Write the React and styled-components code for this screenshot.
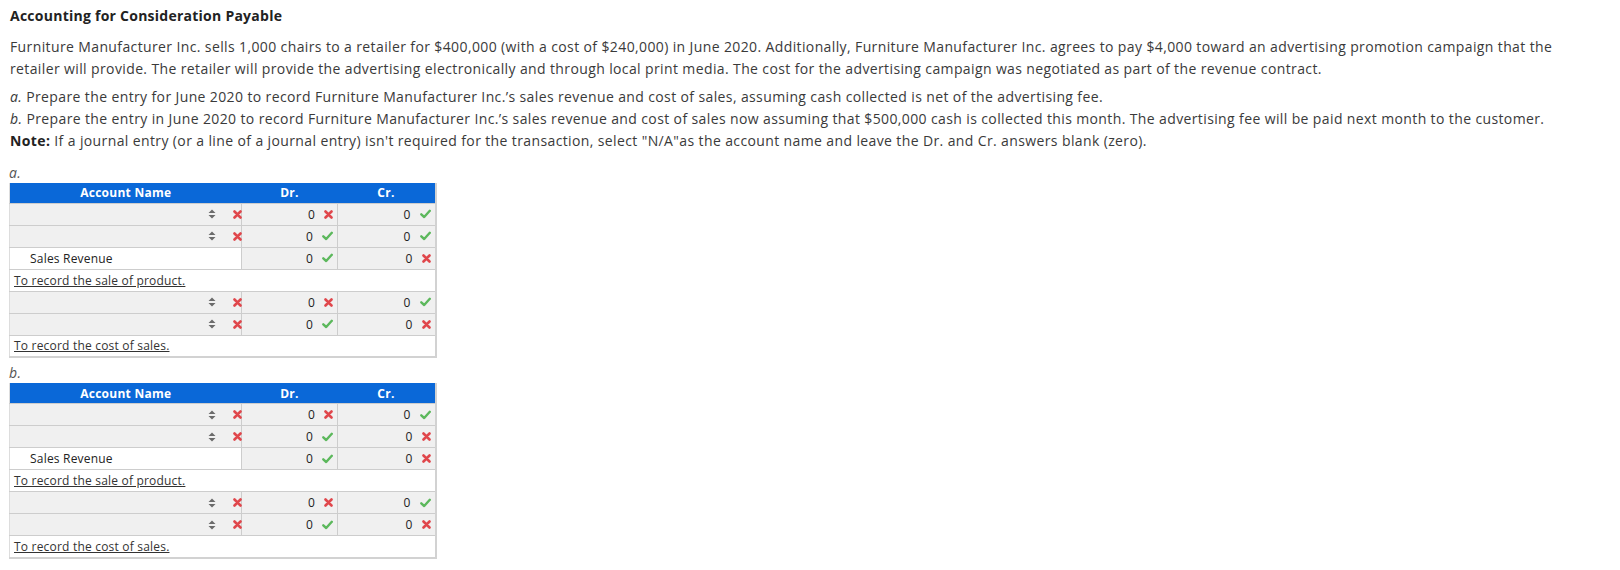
import React from "react";
import styled, { createGlobalStyle } from "styled-components";

const GlobalStyle = createGlobalStyle`
  body {
    margin: 0;
    background: #fff;
    font-family: "Open Sans", "Liberation Sans", sans-serif;
    color: #333;
  }
`;

const entriesA = [
  {
    memo: "To record the sale of product.",
    rows: [
      { account: null, dr: "x", cr: "ok" },
      { account: null, dr: "ok", cr: "ok" },
      { account: "Sales Revenue", dr: "ok", cr: "x" },
    ],
  },
  {
    memo: "To record the cost of sales.",
    rows: [
      { account: null, dr: "x", cr: "ok" },
      { account: null, dr: "ok", cr: "x" },
    ],
  },
];

const entriesB = [
  {
    memo: "To record the sale of product.",
    rows: [
      { account: null, dr: "x", cr: "ok" },
      { account: null, dr: "ok", cr: "x" },
      { account: "Sales Revenue", dr: "ok", cr: "x" },
    ],
  },
  {
    memo: "To record the cost of sales.",
    rows: [
      { account: null, dr: "x", cr: "ok" },
      { account: null, dr: "ok", cr: "x" },
    ],
  },
];

const Arrows = () => (
  <svg width="8" height="12" viewBox="0 0 8 12">
    <path d="M0.5 5 L4 1.5 L7.5 5 Z M0.5 7 L4 10.5 L7.5 7 Z" fill="#6b6b6b" />
  </svg>
);

const Wrong = () => (
  <svg width="9" height="9" viewBox="0 0 9 9">
    <path
      d="M1.5 1.5 L7.5 7.5 M7.5 1.5 L1.5 7.5"
      stroke="#e0474c"
      strokeWidth="2.6"
      strokeLinecap="round"
    />
  </svg>
);

const Right = () => (
  <svg width="11" height="10" viewBox="0 0 11 10">
    <path
      d="M1.3 5.3 L4.2 8 L9.8 1.8"
      stroke="#5cb85c"
      strokeWidth="2.4"
      fill="none"
      strokeLinecap="round"
      strokeLinejoin="round"
    />
  </svg>
);

const Mark = ({ kind }) => (kind === "ok" ? <Right /> : <Wrong />);

const JournalTable = ({ data }) => (
  <Table>
    <colgroup>
      <col style={{ width: 232 }} />
      <col style={{ width: 96 }} />
      <col style={{ width: 98 }} />
    </colgroup>
    <thead>
      <tr>
        <Th>Account Name</Th>
        <Th>Dr.</Th>
        <Th>Cr.</Th>
      </tr>
    </thead>
    <tbody>
      {data.map((entry, i) => (
        <React.Fragment key={i}>
          {entry.rows.map((row, j) => (
            <Row key={j}>
              {row.account ? (
                <AccountTd $white>
                  <AccountName>{row.account}</AccountName>
                </AccountTd>
              ) : (
                <AccountTd>
                  <Select>
                    <Arrows />
                    <Wrong />
                  </Select>
                </AccountTd>
              )}
              <Td>
                <Amount>
                  0 <Mark kind={row.dr} />
                </Amount>
              </Td>
              <Td>
                <Amount>
                  0 <Mark kind={row.cr} />
                </Amount>
              </Td>
            </Row>
          ))}
          <Row>
            <MemoTd colSpan={3}>
              <Memo>{entry.memo}</Memo>
            </MemoTd>
          </Row>
        </React.Fragment>
      ))}
    </tbody>
  </Table>
);

export default function App() {
  return (
    <Page>
      <GlobalStyle />
      <Title>Accounting for Consideration Payable</Title>
      <Para>
        Furniture Manufacturer Inc. sells 1,000 chairs to a retailer for $400,000 (with a cost
        of $240,000) in June 2020. Additionally, Furniture Manufacturer Inc. agrees to pay
        $4,000 toward an advertising promotion campaign that the retailer will provide. The
        retailer will provide the advertising electronically and through local print media. The
        cost for the advertising campaign was negotiated as part of the revenue contract.
      </Para>
      <Para>
        <em>a.</em> Prepare the entry for June 2020 to record Furniture Manufacturer Inc.’s sales
        revenue and cost of sales, assuming cash collected is net of the advertising fee.
        <br />
        <em>b.</em> Prepare the entry in June 2020 to record Furniture Manufacturer Inc.’s sales
        revenue and cost of sales now assuming that $500,000 cash is collected this month. The
        advertising fee will be paid next month to the customer.
        <br />
        <strong>Note:</strong> If a journal entry (or a line of a journal entry) isn't required
        for the transaction, select "N/A"as the account name and leave the Dr. and Cr. answers
        blank (zero).
      </Para>
      <Label>a.</Label>
      <JournalTable data={entriesA} />
      <Label $tight>b.</Label>
      <JournalTable data={entriesB} />
    </Page>
  );
}

const Page = styled.div`
  padding: 6px 32px 20px 9px;
`;

const Title = styled.h1`
  margin: 0 0 10px 1px;
  font-size: 14px;
  line-height: 20px;
  font-weight: 700;
  letter-spacing: 0.25px;
  color: #222;
`;

const Para = styled.p`
  margin: 0 0 7px 1px;
  font-size: 14px;
  line-height: 21.7px;
  letter-spacing: 0.38px;
  color: #3a3a3a;

  strong {
    color: #222;
  }
`;

const Label = styled.div`
  margin-top: ${(p) => (p.$tight ? "5px" : "11px")};
  font-size: 14px;
  line-height: 20px;
  font-style: italic;
  letter-spacing: 0.4px;
  color: #555;
`;

const Table = styled.table`
  width: 427px;
  table-layout: fixed;
  border-collapse: collapse;
  font-size: 12px;
  letter-spacing: 0.2px;
  color: #222;
  border-left: 1px solid #ddd;
  border-right: 2px solid #d2d2d2;
  border-bottom: 2px solid #d2d2d2;
`;

const Row = styled.tr`
  height: 22px;
`;

const Th = styled.th`
  height: 20px;
  padding: 0;
  background: #0a68d8;
  color: #fff;
  font-weight: 700;
  font-size: 12px;
  letter-spacing: 0.25px;
  text-align: center;
`;

const Td = styled.td`
  padding: 0 4px 0 0;
  background: ${(p) => (p.$white ? "#fff" : "#f0f0f0")};
  border-top: 1px solid #cdcdcd;
  border-left: 1px solid #cdcdcd;
`;

const AccountTd = styled(Td)`
  padding: 0;
  border-left: none;
`;

const Select = styled.div`
  display: flex;
  align-items: center;
  justify-content: flex-end;
  gap: 17px;
  margin-right: -1px;
`;

const AccountName = styled.span`
  padding-left: 20px;
`;

const Amount = styled.div`
  display: flex;
  align-items: center;
  justify-content: flex-end;
  gap: 9px;
`;

const MemoTd = styled.td`
  padding: 0 0 0 4px;
  background: #fff;
  border-top: 1px solid #cdcdcd;
`;

const Memo = styled.span`
  text-decoration: underline;
  color: #333;
`;
